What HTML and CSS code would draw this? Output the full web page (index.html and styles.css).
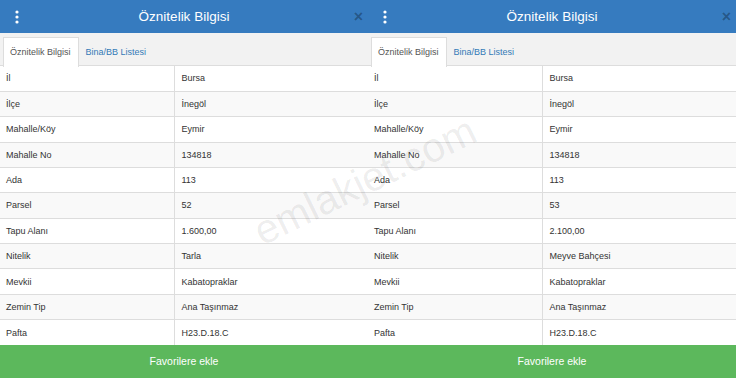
FILE: index.html
```html
<!DOCTYPE html>
<html lang="tr">
<head>
    <meta charset="UTF-8">
    <meta name="viewport" content="width=device-width, initial-scale=1.0">
    <title>Öznitelik Bilgisi</title>
    <link rel="stylesheet" href="styles.css">
</head>
<body>
    <div class="page">
        <!-- Sol parsel -->
        <section class="panel">
            <header class="panel-head">
                <span class="menu">
                    <svg width="4" height="14" viewBox="0 0 4 14"><circle cx="2" cy="2" r="1.6"/><circle cx="2" cy="7" r="1.6"/><circle cx="2" cy="12" r="1.6"/></svg>
                </span>
                <h2>Öznitelik Bilgisi</h2>
                <span class="close">&times;</span>
            </header>
            <ul class="tabs">
                <li class="active">Öznitelik Bilgisi</li>
                <li><a href="#">Bina/BB Listesi</a></li>
            </ul>
            <table class="attr">
                <tr><td>İl</td><td>Bursa</td></tr>
                <tr><td>İlçe</td><td>İnegöl</td></tr>
                <tr><td>Mahalle/Köy</td><td>Eymir</td></tr>
                <tr><td>Mahalle No</td><td>134818</td></tr>
                <tr><td>Ada</td><td>113</td></tr>
                <tr><td>Parsel</td><td>52</td></tr>
                <tr><td>Tapu Alanı</td><td>1.600,00</td></tr>
                <tr><td>Nitelik</td><td>Tarla</td></tr>
                <tr><td>Mevkii</td><td>Kabatopraklar</td></tr>
                <tr><td>Zemin Tip</td><td>Ana Taşınmaz</td></tr>
                <tr><td>Pafta</td><td>H23.D.18.C</td></tr>
            </table>
            <button class="fav">Favorilere ekle</button>
        </section>

        <!-- Sag parsel -->
        <section class="panel">
            <header class="panel-head">
                <span class="menu">
                    <svg width="4" height="14" viewBox="0 0 4 14"><circle cx="2" cy="2" r="1.6"/><circle cx="2" cy="7" r="1.6"/><circle cx="2" cy="12" r="1.6"/></svg>
                </span>
                <h2>Öznitelik Bilgisi</h2>
                <span class="close">&times;</span>
            </header>
            <ul class="tabs">
                <li class="active">Öznitelik Bilgisi</li>
                <li><a href="#">Bina/BB Listesi</a></li>
            </ul>
            <table class="attr">
                <tr><td>İl</td><td>Bursa</td></tr>
                <tr><td>İlçe</td><td>İnegöl</td></tr>
                <tr><td>Mahalle/Köy</td><td>Eymir</td></tr>
                <tr><td>Mahalle No</td><td>134818</td></tr>
                <tr><td>Ada</td><td>113</td></tr>
                <tr><td>Parsel</td><td>53</td></tr>
                <tr><td>Tapu Alanı</td><td>2.100,00</td></tr>
                <tr><td>Nitelik</td><td>Meyve Bahçesi</td></tr>
                <tr><td>Mevkii</td><td>Kabatopraklar</td></tr>
                <tr><td>Zemin Tip</td><td>Ana Taşınmaz</td></tr>
                <tr><td>Pafta</td><td>H23.D.18.C</td></tr>
            </table>
            <button class="fav">Favorilere ekle</button>
        </section>

        <div class="watermark">emlakjet.com</div>
    </div>
</body>
</html>
```

FILE: styles.css
```css
body {
    margin: 0;
    padding: 0;
    font-family: 'Liberation Sans', Arial, sans-serif;
    background-color: #fff;
    color: #333;
    overflow: hidden;
}

.page {
    display: flex;
    width: 736px;
    height: 380px;
    position: relative;
}

.panel {
    flex: 1;
    display: flex;
    flex-direction: column;
    min-width: 0;
}

/* Baslik */
.panel-head {
    display: grid;
    grid-template-columns: 34px 1fr 34px;
    align-items: center;
    height: 33px;
    background-color: #367bbf;
    color: #fff;
}

.panel-head .menu {
    display: flex;
    justify-content: center;
    fill: #fff;
}

.panel-head h2 {
    margin: 0;
    font-size: 13.5px;
    font-weight: normal;
    text-align: center;
}

.panel-head .close {
    justify-self: end;
    padding-right: 5px;
    font-size: 16px;
    font-weight: bold;
    color: rgba(0, 0, 0, 0.3);
    line-height: 1;
}

/* Sekmeler */
.tabs {
    list-style: none;
    margin: 0;
    padding: 4px 0 0 3px;
    height: 33px;
    box-sizing: border-box;
    display: flex;
    background-color: #f2f2f2;
    border-bottom: 1px solid #ddd;
}

.tabs li {
    height: 28px;
    line-height: 28px;
    padding: 0 7px 0 6px;
    font-size: 9px;
    border: 1px solid transparent;
    border-bottom: none;
}

.tabs li.active {
    background-color: #fff;
    border-color: #ddd;
    color: #555;
    height: 29px;
}

.tabs a {
    color: #337ab7;
    text-decoration: none;
}

/* Tablo */
.attr {
    width: 100%;
    border-collapse: collapse;
    table-layout: fixed;
    font-size: 9px;
}

.attr tr {
    height: 25.36px;
}

.attr tr:nth-child(even) {
    background-color: #f9f9f9;
}

.attr td {
    padding: 0 6px;
    border-top: 1px solid #ddd;
}

.attr tr:first-child td {
    border-top: none;
}

.attr td:first-child {
    width: 174px;
    box-sizing: border-box;
}

.attr td + td {
    padding-left: 7px;
    border-left: 1px solid #ddd;
}

.fav {
    height: 33px;
    border: none;
    background-color: #5cb85c;
    color: #fff;
    font-family: inherit;
    font-size: 10.5px;
    cursor: pointer;
}

.watermark {
    position: absolute;
    left: 365px;
    top: 181px;
    transform: translate(-50%, -50%) rotate(-26deg);
    font-size: 41px;
    color: rgba(0, 0, 0, 0.08);
    pointer-events: none;
    white-space: nowrap;
}
```
